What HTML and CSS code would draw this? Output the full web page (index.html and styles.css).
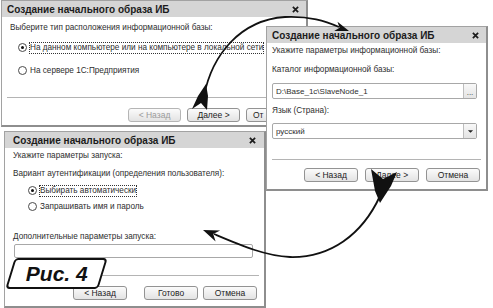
FILE: index.html
```html
<!DOCTYPE html>
<html lang="ru">
<head>
<meta charset="utf-8">
<title>Рис. 4</title>
<link rel="stylesheet" href="styles.css">
</head>
<body>
<div class="desk">

  <section class="win w1">
    <header class="title"><span class="ttl">Создание начального образа ИБ</span><svg class="x" viewBox="0 0 8 8"><path d="M1 1L7 7M7 1L1 7"/></svg></header>
    <div class="body">
      <p class="txt">Выберите тип расположения информационной базы:</p>
      <div class="radios">
        <div class="radio on"><span class="dot"></span><span class="lbl focus">На данном компьютере или на компьютере в локальной сети</span></div>
        <div class="radio"><span class="dot"></span><span class="lbl">На сервере 1С:Предприятия</span></div>
      </div>
    </div>
    <footer class="foot">
      <div class="sep"></div>
      <div class="btns">
        <span class="btn dis">&lt; Назад</span><span class="btn">Далее &gt;</span><span class="btn">От</span>
      </div>
    </footer>
  </section>

  <section class="win w3">
    <header class="title"><span class="ttl">Создание начального образа ИБ</span><svg class="x" viewBox="0 0 8 8"><path d="M1 1L7 7M7 1L1 7"/></svg></header>
    <div class="body">
      <p class="txt">Укажите параметры запуска:</p>
      <p class="txt l2">Вариант аутентификации (определения пользователя):</p>
      <div class="radios">
        <div class="radio on"><span class="dot"></span><span class="lbl focus">Выбирать автоматически</span></div>
        <div class="radio"><span class="dot"></span><span class="lbl">Запрашивать имя и пароль</span></div>
      </div>
      <p class="txt l3">Дополнительные параметры запуска:</p>
      <div class="field"></div>
    </div>
    <footer class="foot">
      <div class="sep"></div>
      <div class="btns">
        <span class="btn back">&lt; Назад</span><span class="btn">Готово</span><span class="btn">Отмена</span>
      </div>
    </footer>
  </section>

  <section class="win w2">
    <header class="title"><span class="ttl">Создание начального образа ИБ</span><svg class="x" viewBox="0 0 8 8"><path d="M1 1L7 7M7 1L1 7"/></svg></header>
    <div class="body">
      <p class="txt">Укажите параметры информационной базы:</p>
      <p class="txt l2">Каталог информационной базы:</p>
      <div class="field"><span class="val">D:\Base_1c\SlaveNode_1</span><span class="fbtn">...</span></div>
      <p class="txt l3">Язык (Страна):</p>
      <div class="field sel"><span class="val">русский</span><span class="fbtn drop"><svg viewBox="0 0 8 5"><path d="M1 1H7L4 4Z"/></svg></span></div>
    </div>
    <footer class="foot">
      <div class="sep"></div>
      <div class="btns">
        <span class="btn">&lt; Назад</span><span class="btn">Далее &gt;</span><span class="btn">Отмена</span>
      </div>
    </footer>
  </section>

  <div class="fig"><span class="figtxt">Рис. 4</span></div>

  <svg class="arrows" viewBox="0 0 493 308">
    <path class="ln" d="M204 96 C212 55 240 20 285 17 C310 16 325 21 339 27"/>
    <polygon points="349,31 337.5,21.7 339.6,27.7 334.2,31.1"/>
    <polygon points="206,84 208,96 207,110 201,103 192,109 198,96"/>
    <path class="ln" d="M380 196 C362 235 330 258 290 257 C265 256 240 245 214 234"/>
    <polygon points="203,230 220.1,230.4 213.2,234.1 215.6,241.5"/>
    <polygon points="371,169 383,179 397,172 391,186 380,203 375,191"/>
  </svg>
</div>
</body>
</html>
```

FILE: styles.css
```css
* { box-sizing: border-box; margin: 0; padding: 0; }
html, body { margin: 0; background: #fff; }
body {
  width: 493px; height: 308px; overflow: hidden;
  font-family: "Liberation Sans Narrow", "Liberation Sans", Arial, sans-serif;
  font-size: 8.2px; color: #2e2e2e;
}
.desk { position: relative; width: 493px; height: 308px; }

.win {
  position: absolute;
  display: flex; flex-direction: column;
  background: #fff;
  border: 1px solid #a2a2a2;
  border-right: 2px solid #8e8e8e;
  border-bottom: 2px solid #8e8e8e;
  overflow: hidden;
}
.w1 { left: 1px; top: 0; width: 307px; height: 127px; }
.w2 { left: 266px; top: 26px; width: 222px; height: 165px; }
.w3 { left: 4px; top: 131px; width: 262px; height: 177px; }

.title {
  flex: none;
  height: 16px;
  display: flex; align-items: center; justify-content: space-between;
  background: #d5d5d5;
  padding: 0 7px 0 5px;
  font-family: "Liberation Sans", Arial, sans-serif;
  font-weight: bold; font-size: 10px; color: #1c1c1c;
  white-space: nowrap;
}
.w3 .title { padding-left: 8px; padding-right: 8px; }
.x { width: 7px; height: 7px; flex: none; }
.x path { stroke: #1c1c1c; stroke-width: 2; fill: none; }

.body { flex: 1; display: flex; flex-direction: column; padding: 0 8px 0 8px; }
.w1 .body { padding-top: 6px; }
.w2 .body { padding: 3px 9px 0 5px; }
.w3 .body { padding: 3px 11px 0 8px; }

.txt { line-height: 10px; height: 10px; white-space: nowrap; }
.w2 .l2 { margin-top: 9px; }
.w2 .l3 { margin-top: 7px; }
.w3 .l2 { margin-top: 8px; }
.w3 .l3 { margin-top: 19px; }

.radios { display: flex; flex-direction: column; padding-left: 8px; }
.w1 .radios { margin-top: 8px; gap: 10px; }
.w3 .radios { margin-top: 5px; gap: 3px; padding-left: 15px; }
.radio { display: flex; align-items: center; height: 13px; gap: 2px; white-space: nowrap; }
.dot {
  flex: none; width: 9px; height: 9px; border-radius: 50%;
  border: 1px solid #4a4a4a; background: #fff;
  display: flex; align-items: center; justify-content: center;
}
.radio.on .dot::after { content: ""; width: 3px; height: 3px; border-radius: 50%; background: #111; }
.lbl { line-height: 10px; padding: 1px 1px; }
.focus { outline: 1px dotted #333; outline-offset: -1px; }

.field {
  display: flex; align-items: center; justify-content: space-between;
  height: 16px; border: 1px solid #a8a8a8; border-radius: 2px; background: #fff;
  margin-top: 8px;
}
.w2 .sel { margin-top: 7px; }
.w3 .field { height: 14px; margin-top: 2px; margin-left: 1px; }
.val {
  padding-left: 3px; font-family: "Liberation Sans", Arial, sans-serif; font-size: 8px;
}
.fbtn {
  width: 13px; height: 14px;
  border-left: 1px solid #bdbdbd;
  background: linear-gradient(#f8f8f8, #e4e4e4);
  display: flex; align-items: flex-end; justify-content: center;
  font-size: 8px; line-height: 10px; color: #333;
}
.drop { align-items: center; }
.drop svg { width: 7px; height: 5px; }
.drop path { fill: #222; }

.foot { flex: none; display: flex; flex-direction: column; }
.sep { height: 1px; background: #b4b4b4; margin: 0 5px; }
.btns { display: flex; justify-content: flex-end; gap: 6px; padding: 10px 7px 3px 0; }
.w1 .btns { padding-right: 0; }
.w2 .btns { padding: 8px 6px 7px 0; gap: 7px; }
.w3 .btns { padding: 10px 7px 6px 0; gap: 5px; }
.w3 .back { margin-right: 12px; }
.btn {
  width: 53px; height: 14px;
  display: flex; align-items: center; justify-content: center;
  border: 1px solid #939393; border-radius: 3px;
  background: linear-gradient(#fbfbfb, #e3e3e3);
  font-size: 8.5px; color: #222; white-space: nowrap;
}
.w1 .btn:last-child { width: 60px; justify-content: flex-start; padding-left: 6px; }
.w2 .btn, .w3 .btn { width: 54px; }
.btn.dis { color: #9a9a9a; border-color: #b5b5b5; }

.fig {
  position: absolute; left: 10px; top: 258px; width: 93px; height: 31px;
  border: 2px solid #111; border-radius: 4px; background: #fff;
  transform: skewX(-17deg);
  display: flex; align-items: center; justify-content: center;
}
.figtxt {
  transform: skewX(17deg);
  font-family: "Liberation Sans", Arial, sans-serif;
  font-weight: bold; font-style: italic; font-size: 21px; color: #111;
}

.arrows { position: absolute; left: 0; top: 0; width: 493px; height: 308px; pointer-events: none; }
.arrows .ln { fill: none; stroke: #111; stroke-width: 1.8; }
.arrows polygon { fill: #111; }
```
